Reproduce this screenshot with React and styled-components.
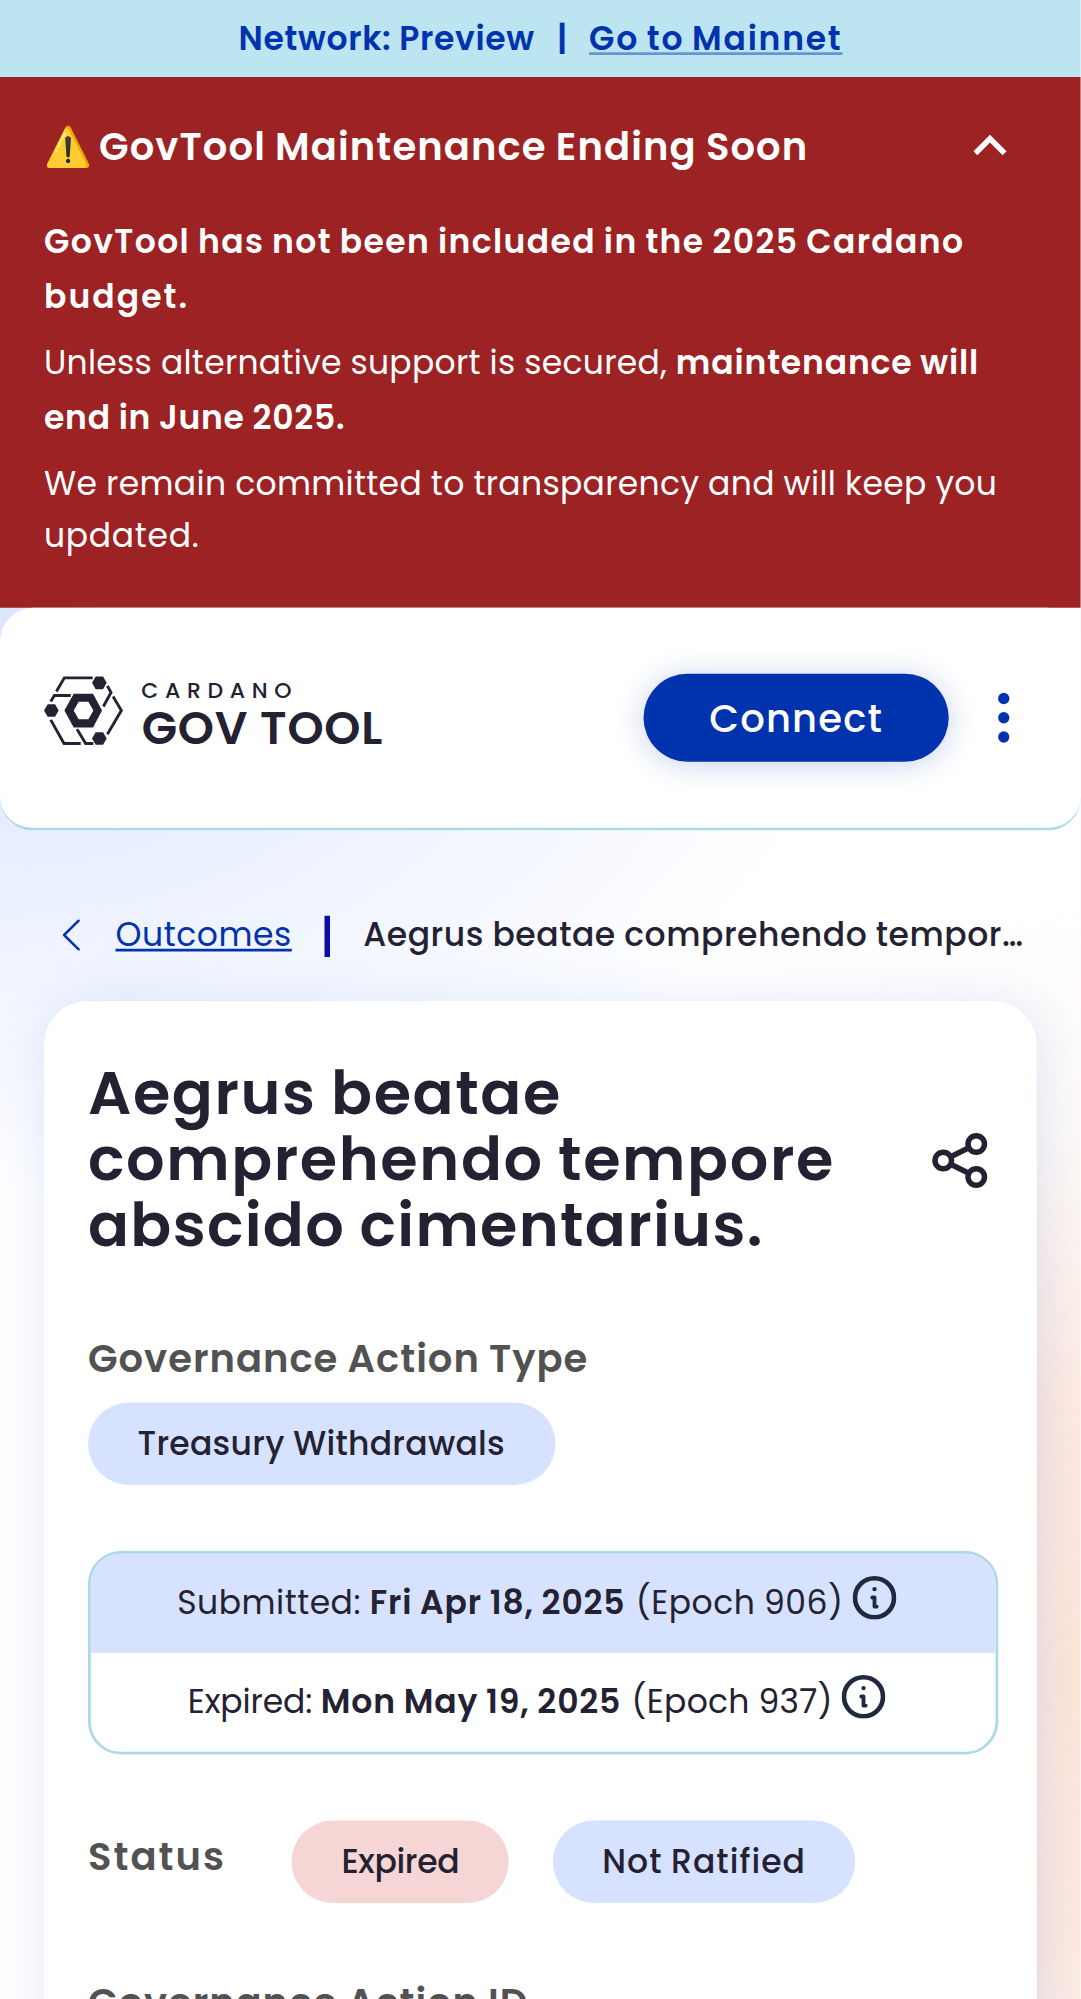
import React from "react";
import styled, { createGlobalStyle } from "styled-components";

const ink = "#242232";
const blue = "#0033ad";
const line = "#add8e6";

const GlobalStyle = createGlobalStyle`
  html { overflow: hidden; }
  body {
    margin: 0;
    width: 1081px;
    height: 1999px;
    overflow: hidden;
    font-family: Poppins, Inter, sans-serif;
    color: ${ink};
    background: #fff;
  }
  *, *::before, *::after { box-sizing: border-box; }
`;

/* The layout is authored for a 393px wide phone and shown at 2.75x. */
const Screen = styled.div`
  width: 393.1px;
  height: 727px;
  overflow: hidden;
  transform: scale(2.75);
  transform-origin: 0 0;
  font-size: 12px;
  background:
    radial-gradient(ellipse 310px 200px at 0 235px, #dbe4ff 0%, rgba(226, 234, 255, 0.75) 40%, rgba(255, 255, 255, 0) 100%),
    radial-gradient(ellipse 240px 290px at 393px 610px, #ffe8da 0%, rgba(255, 234, 222, 0.95) 35%, rgba(255, 246, 240, 0.4) 70%, rgba(255, 255, 255, 0) 100%),
    #fff;
`;

/* Letter tracking that leaves the gaps between words as they are. */
const Tracked = styled.span`
  letter-spacing: ${(p) => p.$by}px;
  word-spacing: ${(p) => -p.$by}px;
`;

const NetworkBar = styled.div`
  height: 28px;
  display: flex;
  align-items: center;
  justify-content: center;
  gap: 8px;
  background: #bce4f1;
  color: ${blue};
  font-weight: 600;
  line-height: 18px;
`;

const NetworkLink = styled.a`
  color: inherit;
  text-decoration: underline;
  text-decoration-color: rgba(0, 51, 173, 0.45);
`;

const Notice = styled.section`
  height: 193px;
  padding: 13px 21px 0 16px;
  background: #9c2224;
  color: #fff;
`;

const NoticeHead = styled.div`
  display: flex;
  align-items: center;
  justify-content: space-between;
  height: 24px;
  margin-bottom: 12.5px;
`;

const NoticeTitle = styled.h2`
  margin: 0;
  display: flex;
  gap: 3px;
  font-size: 14px;
  font-weight: 600;
  line-height: 20px;
`;

const NoticeText = styled.p`
  margin: 0 0 4px;
  line-height: ${(p) => p.$leading || 20}px;
  white-space: nowrap;
  strong { font-weight: 600; }
`;

const Header = styled.header`
  height: 81px;
  padding: 24px 16px;
  display: flex;
  align-items: center;
  background: #fff;
  border-bottom: 1px solid ${line};
  border-radius: 12px;
`;

const Logo = styled.svg`
  width: 123.2px;
  height: 25.1px;
  margin-right: auto;
  margin-top: -5px;
  overflow: visible;
`;

const ConnectButton = styled.button`
  height: 32px;
  padding: 0 24px;
  margin-right: 8px;
  border: 0;
  border-radius: 16px;
  background: ${blue};
  color: #fff;
  font: 500 14px/24px Poppins, Inter, sans-serif;
  letter-spacing: 0.43px;
  box-shadow: 0 1px 11px rgba(0, 51, 173, 0.22);
`;

const Crumbs = styled.nav`
  height: 62px;
  padding: 14px 18px 0 16px;
  display: flex;
  align-items: center;
`;

const BackLink = styled.a`
  display: flex;
  align-items: center;
  gap: 6px;
  color: ${blue};
  text-decoration: underline;
  line-height: 18px;
`;

const CrumbDivider = styled.span`
  flex: none;
  width: 2px;
  height: 15px;
  margin: 0 12px;
  background: #0c0ca0;
`;

const CrumbCurrent = styled.span`
  flex: 1;
  min-width: 0;
  overflow: hidden;
  white-space: nowrap;
  text-overflow: ellipsis;
  font-weight: 500;
  line-height: 18px;
  letter-spacing: 0.19px;
  word-spacing: -0.19px;
`;

const Card = styled.main`
  width: 361px;
  height: 420px;
  margin-left: 16px;
  padding: 22px 16px;
  border-radius: 16px;
  background: #fff;
  box-shadow: 2px 2px 20px rgba(47, 98, 220, 0.16);
`;

const CardHead = styled.div`
  display: flex;
  align-items: center;
  justify-content: space-between;
  margin-bottom: 26px;
`;

const Title = styled.h1`
  margin: 0;
  width: 290px;
  font-size: 22px;
  font-weight: 600;
  line-height: 24px;
`;

const Label = styled.h3`
  margin: 0;
  font-size: 14px;
  font-weight: 600;
  line-height: 20px;
  color: #525252;
`;

const Chip = styled.span`
  display: inline-flex;
  align-items: center;
  height: 30px;
  padding: 0 18px;
  border-radius: 15px;
  background: ${(p) => (p.$danger ? "#f5d6d5" : "#d6e2ff")};
  font-weight: 500;
  line-height: 18px;
  white-space: nowrap;
`;

const TypeBlock = styled.div`
  display: flex;
  flex-direction: column;
  align-items: flex-start;
  gap: 6px;
  margin-bottom: 24px;
`;

const Dates = styled.div`
  width: 331px;
  margin-bottom: 24px;
  border: 1px solid ${line};
  border-radius: 12px;
  overflow: hidden;
`;

const DateRow = styled.div`
  height: 36px;
  display: flex;
  align-items: center;
  justify-content: center;
  padding-right: 4.5px;
  line-height: 18px;
  white-space: pre;
  background: ${(p) => (p.$tinted ? "#d6e2ff" : "transparent")};
  strong { font-weight: 600; margin-right: 0.6px; }
`;

const InfoSvg = styled.svg`
  width: 16px;
  height: 16px;
  margin: 0 0 3.6px 3.3px;
`;

const StatusRow = styled.div`
  display: flex;
  align-items: center;
  gap: 16px;
  margin-bottom: 26px;
  ${Label} { margin: 0 8px 4px 0; }
`;

const hex = (cx, cy) =>
  `M${cx - 22} ${cy}l11-19h22l11 19-11 19h-22z`;

const InfoIcon = () => (
  <InfoSvg viewBox="-8 -8 16 16" fill="none" stroke="#212a3d" strokeLinecap="round" strokeLinejoin="round">
    <circle r="7.1" strokeWidth="1.7" />
    <circle cy="-3.15" r="0.8" fill="#212a3d" stroke="none" />
    <path d="M-0.8 -0.1H0V3.2H0.8" strokeWidth="1.4" />
  </InfoSvg>
);

export default function App() {
  return (
    <>
      <GlobalStyle />
      <Screen>
        <NetworkBar>
          <Tracked $by={0.24}>Network: Preview</Tracked>
          <span>|</span>
          <NetworkLink><Tracked $by={0.64}>Go to Mainnet</Tracked></NetworkLink>
        </NetworkBar>

        <Notice>
          <NoticeHead>
            <NoticeTitle>
              <span>⚠️</span>
              <Tracked $by={0.4}>GovTool Maintenance Ending Soon</Tracked>
            </NoticeTitle>
            <svg width="24" height="24" viewBox="0 0 24 24" fill="#fff">
              <path d="m12 8-6 6 1.41 1.41L12 10.83l4.59 4.58L18 14z" />
            </svg>
          </NoticeHead>
          <NoticeText>
            <strong>
              <Tracked $by={0.5}>GovTool has not been included in the 2025 Cardano</Tracked>
              <br />
              <Tracked $by={0.75}>budget.</Tracked>
            </strong>
          </NoticeText>
          <NoticeText>
            <Tracked $by={0.1}>Unless alternative support is secured, </Tracked>
            <strong>
              <Tracked $by={0.31}>maintenance will</Tracked>
              <br />
              <Tracked $by={0.27}>end in June 2025.</Tracked>
            </strong>
          </NoticeText>
          <NoticeText $leading={19}>
            <Tracked $by={0.115}>We remain committed to transparency and will keep you</Tracked>
            <br />
            <Tracked $by={0.25}>updated.</Tracked>
          </NoticeText>
        </Notice>

        <Header>
          <Logo viewBox="42 80 1016 207" fill={ink}>
            <path
              fillRule="evenodd"
              d="M103 182l28-50h58l27 50-27 51h-58zM131 182l15 26h29l15-26-15-26h-29z"
            />
            <path d={hex(208, 99) + hex(64, 182) + hex(208, 266)} />
            <g fill="none" stroke={ink} strokeWidth="8.6">
              <path d="M79 125L103 84H188" />
              <path d="M62 155L73 137H122" />
              <path d="M232 108L243 128L220 170" />
              <path d="M249 140L274 182L232 253" />
              <path d="M62 210L102 281H152" />
              <path d="M141 238L167 281H190" />
            </g>
            <text x="334" y="144" fontSize="66" fontWeight="500" textLength="450">CARDANO</text>
            <text x="335" y="283" fontSize="138" fontWeight="600" textLength="722">GOV TOOL</text>
          </Logo>
          <ConnectButton>Connect</ConnectButton>
          <svg width="24" height="24" viewBox="0 0 24 24" fill={blue}>
            <circle cx="12" cy="5" r="2.05" />
            <circle cx="12" cy="12" r="2.05" />
            <circle cx="12" cy="19" r="2.05" />
          </svg>
        </Header>

        <Crumbs>
          <BackLink>
            <svg width="20" height="20" viewBox="0 0 20 20" fill="none" stroke={blue} strokeWidth="0.9">
              <path d="M12.6 4.8L7.3 10L12.6 15.2" strokeLinecap="round" strokeLinejoin="round" />
            </svg>
            <Tracked $by={0.2}>Outcomes</Tracked>
          </BackLink>
          <CrumbDivider />
          <CrumbCurrent>Aegrus beatae comprehendo tempore abscido cimentarius.</CrumbCurrent>
        </Crumbs>

        <Card>
          <CardHead>
            <Title>
              <Tracked $by={0.58}>Aegrus beatae comprehendo tempore </Tracked>
              <Tracked $by={0.48}>abscido cimentarius.</Tracked>
            </Title>
            <svg width="24" height="24" viewBox="0 0 24 24" fill="none" stroke={ink} strokeWidth="2">
              <circle cx="18" cy="6" r="3" />
              <circle cx="6" cy="12" r="3" />
              <circle cx="18" cy="18" r="3" />
              <path d="M8.7 10.65L15.3 7.35M8.7 13.35L15.3 16.65" />
            </svg>
          </CardHead>

          <TypeBlock>
            <Label><Tracked $by={0.36}>Governance Action Type</Tracked></Label>
            <Chip><Tracked $by={0.1}>Treasury Withdrawals</Tracked></Chip>
          </TypeBlock>

          <Dates>
            <DateRow $tinted>
              <span>
                <Tracked $by={0.18}>Submitted: </Tracked>
                <strong><Tracked $by={0.3}>Fri Apr 18, 2025</Tracked></strong>
                <Tracked $by={0.18}> (Epoch 906)</Tracked>
              </span>
              <InfoIcon />
            </DateRow>
            <DateRow>
              <span>
                <Tracked $by={-0.05}>Expired: </Tracked>
                <strong><Tracked $by={0.3}>Mon May 19, 2025</Tracked></strong>
                <Tracked $by={0.1}> (Epoch 937)</Tracked>
              </span>
              <InfoIcon />
            </DateRow>
          </Dates>

          <StatusRow>
            <Label><Tracked $by={0.73}>Status</Tracked></Label>
            <Chip $danger><Tracked $by={-0.13}>Expired</Tracked></Chip>
            <Chip><Tracked $by={0.38}>Not Ratified</Tracked></Chip>
          </StatusRow>

          <Label><Tracked $by={0.34}>Governance Action ID</Tracked></Label>
        </Card>
      </Screen>
    </>
  );
}
